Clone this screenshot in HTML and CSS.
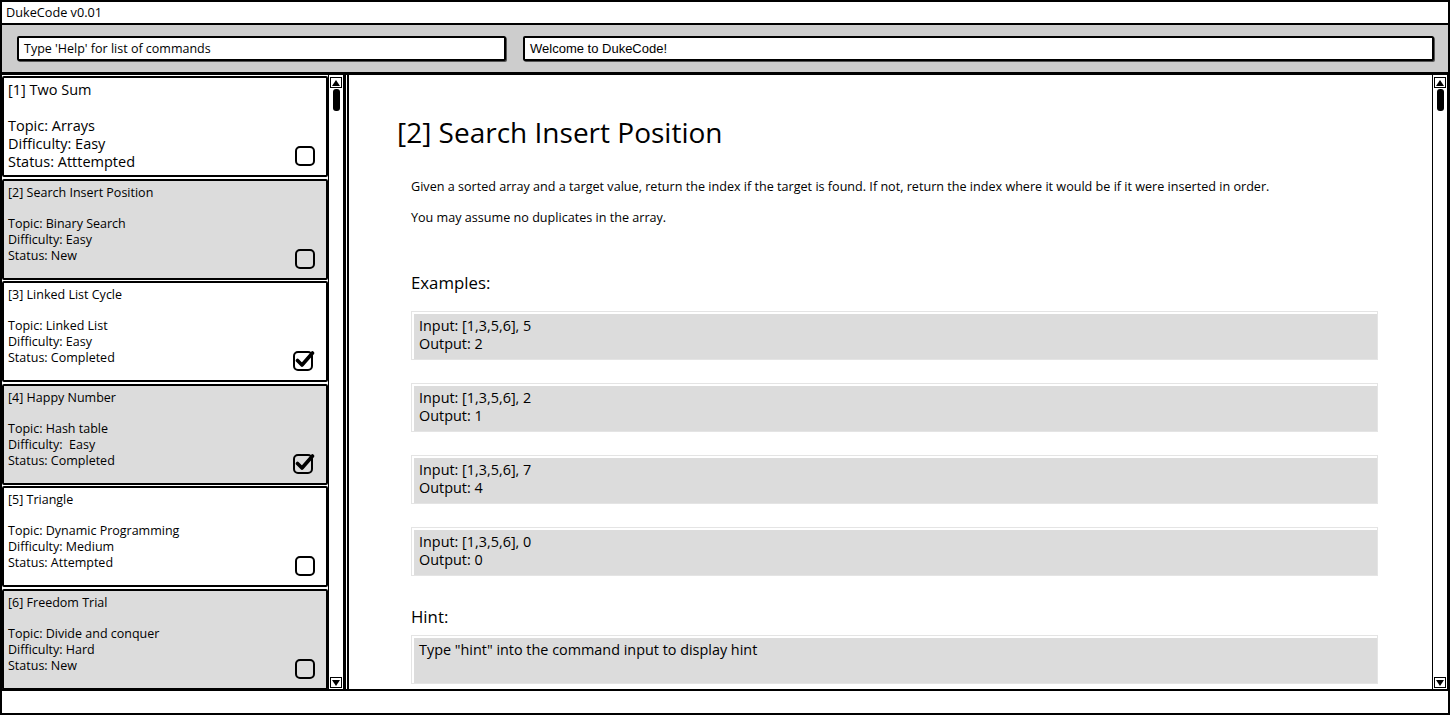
FILE: index.html
```html
<!DOCTYPE html>
<html>
<head>
<meta charset="utf-8">
<title>DukeCode v0.01</title>
<link rel="stylesheet" href="styles.css">
</head>
<body>
<div class="window">
  <div class="titlebar">DukeCode v0.01</div>
  <div class="toolbar">
    <div class="field field-cmd">Type 'Help' for list of commands</div>
    <div class="field field-msg">Welcome to DukeCode!</div>
  </div>
  <div class="main">
    <div class="sidebar">
      <div class="list">
        <div class="card card-big">
          <div class="card-text">
            <div class="card-title">[1] Two Sum</div>
            <div>Topic: Arrays</div>
            <div>Difficulty: Easy</div>
            <div>Status: Atttempted</div>
          </div>
          <svg class="check" width="20" height="20" viewBox="0 0 20 20"><rect x="1" y="1" width="18" height="18" rx="4" fill="none" stroke="#000" stroke-width="2"/></svg>
        </div>
        <div class="card alt">
          <div class="card-text">
            <div class="card-title">[2] Search Insert Position</div>
            <div>Topic: Binary Search</div>
            <div>Difficulty: Easy</div>
            <div>Status: New</div>
          </div>
          <svg class="check" width="20" height="20" viewBox="0 0 20 20"><rect x="1" y="1" width="18" height="18" rx="4" fill="none" stroke="#000" stroke-width="2"/></svg>
        </div>
        <div class="card">
          <div class="card-text">
            <div class="card-title">[3] Linked List Cycle</div>
            <div>Topic: Linked List</div>
            <div>Difficulty: Easy</div>
            <div>Status: Completed</div>
          </div>
          <svg class="check" width="22" height="22" viewBox="0 0 22 22"><rect x="1" y="3" width="18" height="18" rx="4" fill="none" stroke="#000" stroke-width="2"/><path d="M4.5 11.5 L9 16 L19.5 4" fill="none" stroke="#000" stroke-width="3.6" stroke-linecap="round" stroke-linejoin="round"/></svg>
        </div>
        <div class="card alt">
          <div class="card-text">
            <div class="card-title">[4] Happy Number</div>
            <div>Topic: Hash table</div>
            <div>Difficulty:&nbsp; Easy</div>
            <div>Status: Completed</div>
          </div>
          <svg class="check" width="22" height="22" viewBox="0 0 22 22"><rect x="1" y="3" width="18" height="18" rx="4" fill="none" stroke="#000" stroke-width="2"/><path d="M4.5 11.5 L9 16 L19.5 4" fill="none" stroke="#000" stroke-width="3.6" stroke-linecap="round" stroke-linejoin="round"/></svg>
        </div>
        <div class="card">
          <div class="card-text">
            <div class="card-title">[5] Triangle</div>
            <div>Topic: Dynamic Programming</div>
            <div>Difficulty: Medium</div>
            <div>Status: Attempted</div>
          </div>
          <svg class="check" width="20" height="20" viewBox="0 0 20 20"><rect x="1" y="1" width="18" height="18" rx="4" fill="none" stroke="#000" stroke-width="2"/></svg>
        </div>
        <div class="card alt">
          <div class="card-text">
            <div class="card-title">[6] Freedom Trial</div>
            <div>Topic: Divide and conquer</div>
            <div>Difficulty: Hard</div>
            <div>Status: New</div>
          </div>
          <svg class="check" width="20" height="20" viewBox="0 0 20 20"><rect x="1" y="1" width="18" height="18" rx="4" fill="none" stroke="#000" stroke-width="2"/></svg>
        </div>
      </div>
      <div class="scrollbar">
        <div class="arrow up"><svg width="8" height="6" viewBox="0 0 8 6"><path d="M0 6 L4 0 L8 6 Z" fill="#000"/></svg></div>
        <div class="track"><div class="thumb"></div></div>
        <div class="arrow down"><svg width="8" height="6" viewBox="0 0 8 6"><path d="M0 0 L4 6 L8 0 Z" fill="#000"/></svg></div>
      </div>
    </div>
    <div class="content">
      <div class="problem">
        <h1 class="heading">[2] Search Insert Position</h1>
        <p class="desc">Given a sorted array and a target value, return the index if the target is found. If not, return the index where it would be if it were inserted in order.</p>
        <p class="desc">You may assume no duplicates in the array.</p>
        <h2 class="section">Examples:</h2>
        <div class="examples">
          <div class="box">Input: [1,3,5,6], 5<br>Output: 2</div>
          <div class="box">Input: [1,3,5,6], 2<br>Output: 1</div>
          <div class="box">Input: [1,3,5,6], 7<br>Output: 4</div>
          <div class="box">Input: [1,3,5,6], 0<br>Output: 0</div>
        </div>
        <h2 class="section hint-label">Hint:</h2>
        <div class="box">Type "hint" into the command input to display hint</div>
      </div>
      <div class="scrollbar">
        <div class="arrow up"><svg width="8" height="6" viewBox="0 0 8 6"><path d="M0 6 L4 0 L8 6 Z" fill="#000"/></svg></div>
        <div class="track"><div class="thumb"></div></div>
        <div class="arrow down"><svg width="8" height="6" viewBox="0 0 8 6"><path d="M0 0 L4 6 L8 0 Z" fill="#000"/></svg></div>
      </div>
    </div>
  </div>
  <div class="statusbar"></div>
</div>
</body>
</html>
```

FILE: styles.css
```css
* { box-sizing: border-box; }

html, body {
  margin: 0;
  padding: 0;
  background: #fff;
}

body {
  font-family: "Open Sans", "Liberation Sans", sans-serif;
  color: #000;
}

.window {
  width: 1450px;
  height: 715px;
  border: 2px solid #000;
  display: flex;
  flex-direction: column;
  overflow: hidden;
}

.titlebar {
  height: 23px;
  flex: none;
  border-bottom: 2px solid #000;
  font-size: 12.7px;
  line-height: 20px;
  padding-left: 4px;
  background: #fff;
}

.toolbar {
  height: 50px;
  flex: none;
  background: #cdcdcd;
  border-bottom: 3px solid #000;
  display: flex;
  align-items: flex-start;
  padding: 11px 14px 0 15px;
  gap: 17px;
}

.field {
  height: 25px;
  border: 2px solid #000;
  border-radius: 2px;
  background: #fff;
  font-size: 12.5px;
  line-height: 21px;
  padding-left: 5px;
  box-shadow: 1px 1px 0 #555;
}

.field-cmd { width: 489px; }

.field-msg {
  flex: 1;
  font-family: "Liberation Sans", Arial, sans-serif;
  font-size: 13px;
}

.main {
  height: 614px;
  flex: none;
  display: flex;
}

.sidebar {
  width: 344px;
  flex: none;
  display: flex;
  border-right: 2px solid #000;
}

.list {
  width: 326px;
  display: flex;
  flex-direction: column;
  gap: 1.5px;
  padding-top: 1px;
  overflow: hidden;
}

.card {
  height: 101px;
  flex: none;
  border: 2px solid #000;
  border-radius: 2px;
  background: #fff;
  display: flex;
  justify-content: space-between;
  padding: 4px 11px 9px 4px;
  font-size: 12.5px;
  line-height: 16px;
}

.card.alt { background: #dcdcdc; }

.card-title { margin-bottom: 15px; }

.card-big {
  font-size: 14.5px;
  line-height: 18px;
  padding-top: 3px;
}

.card-big .card-title { margin-bottom: 18px; }

.check {
  align-self: flex-end;
  flex: none;
}

.scrollbar {
  width: 16px;
  flex: none;
  display: flex;
  flex-direction: column;
  border-left: 1px solid #000;
  border-right: 1px solid #000;
  background: #fff;
  padding: 2px 1px 1px;
}

.arrow {
  height: 11px;
  flex: none;
  border: 1px solid #000;
  display: flex;
  align-items: center;
  justify-content: center;
}

.track {
  flex: 1;
  padding: 1px 0 0 3px;
}

.thumb {
  width: 7px;
  height: 22px;
  background: #000;
  border-radius: 3px;
}

.content {
  flex: 1;
  display: flex;
  border-left: 2px solid #000;
  margin-left: 1px;
  min-width: 0;
}

.problem {
  flex: 1;
  padding: 41px 54px 0 48px;
  overflow: hidden;
}

.heading {
  margin: 0 0 30px;
  font-size: 28px;
  font-weight: 400;
  line-height: 32px;
}

.desc {
  margin: 0 0 14px 14px;
  font-size: 12.6px;
  line-height: 17px;
}

.section {
  margin: 46px 0 17px 14px;
  font-size: 16.8px;
  font-weight: 400;
  line-height: 22px;
}

.examples {
  display: flex;
  flex-direction: column;
  gap: 23px;
}

.box {
  margin-left: 14px;
  height: 49px;
  border: 1px solid #e4e4e4;
  background: #dcdcdc;
  box-shadow: inset 2px 2px 0 #fff;
  padding: 5px 7px;
  font-size: 14.4px;
  line-height: 18px;
}

.section.hint-label { margin-top: 30px; margin-bottom: 7px; }

.statusbar {
  flex: 1;
  border-top: 2px solid #000;
  background: #fff;
}
```
